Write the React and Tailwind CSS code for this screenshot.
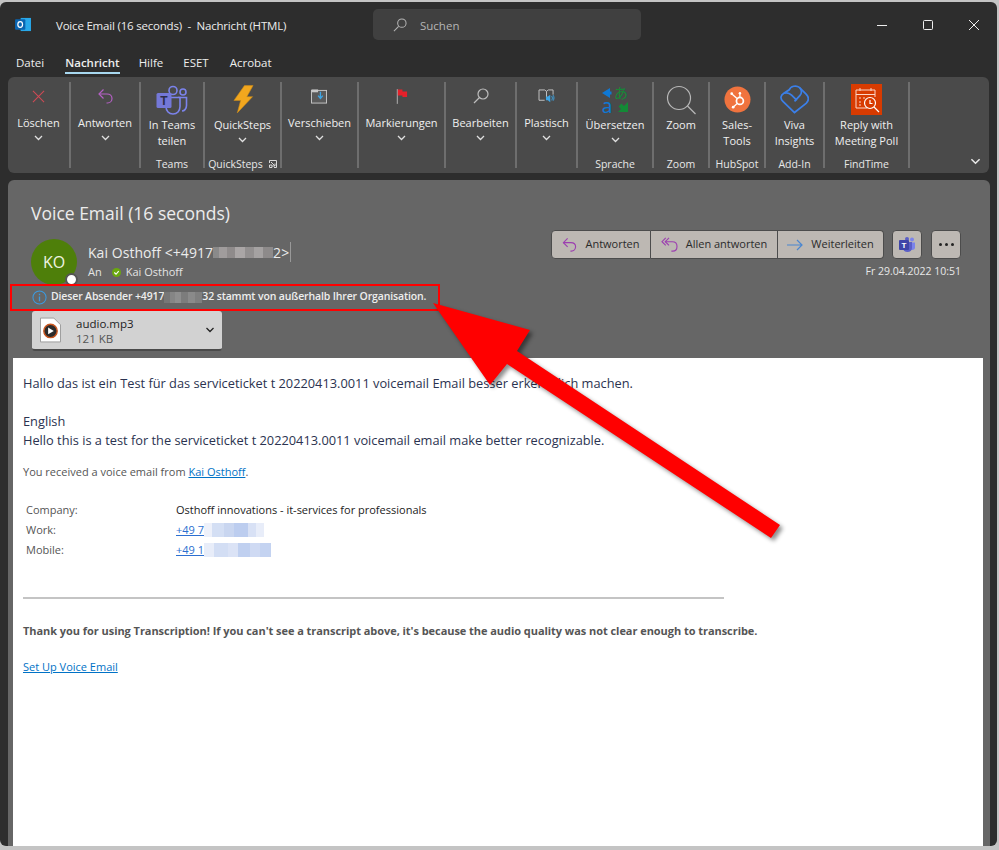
const ChevronDown = ({ className = "w-[9px] h-[6px]" }) => (
  <svg viewBox="0 0 9 6" className={className} fill="none" stroke="currentColor" strokeWidth="1.3">
    <path d="M1 1l3.5 3.5L8 1" />
  </svg>
);

const ReplyIcon = ({ color = "#b560c5", className = "w-[16px] h-[16px]" }) => (
  <svg viewBox="0 0 16 16" className={className} fill="none" stroke={color} strokeWidth="1.2">
    <path d="M6 1.5L1.5 6 6 10.5" />
    <path d="M1.5 6h8c3 0 5 2 5 4.5s-2 4.5-4.5 4.5H9" />
  </svg>
);

const ReplyAllIcon = () => (
  <svg viewBox="0 0 18 16" className="w-[17px] h-[15px]" fill="none" stroke="#9c3fb0" strokeWidth="1.2">
    <path d="M5 1L1 5l4 4" />
    <path d="M8.500 1L4.500 5l4 4" />
    <path d="M4.500 5h7.500c3 0 5 2 5 5s-2 5-4.500 5H11" />
  </svg>
);

const TeamsLogo = ({ className }) => (
  <svg viewBox="0 0 32 30" className={className}>
    <circle cx="17" cy="5.500" r="4" fill="none" stroke="#7b83eb" strokeWidth="1.600" />
    <circle cx="27" cy="7" r="3" fill="none" stroke="#7b83eb" strokeWidth="1.600" />
    <path d="M22 12.500h8.500v8c0 3-2 5.500-4.500 5.500" fill="none" stroke="#7b83eb" strokeWidth="1.600" />
    <path d="M10 12.500h14v9c0 4.500-3 7.500-7 7.500s-7-3-7-7.500z" fill="#4a4a4a" stroke="#7b83eb" strokeWidth="1.600" />
    <rect x="0.500" y="8" width="15" height="15" rx="1.500" fill="#7478d8" />
    <text x="8" y="20" textAnchor="middle" fontSize="12" fontWeight="700" fill="#2d2d4a" fontFamily="Liberation Sans, sans-serif">T</text>
  </svg>
);

const RibbonIcons = {
  del: (
    <svg viewBox="0 0 14 14" className="w-[13px] h-[13px]" fill="none" stroke="#d04a55" strokeWidth="1.100">
      <path d="M1 1l12 12M13 1L1 13" />
    </svg>
  ),
  reply: <ReplyIcon className="w-[17px] h-[16px]" />,
  teams: <TeamsLogo className="w-[32px] h-[30px]" />,
  quick: (
    <svg viewBox="0 0 24 30" className="w-[23px] h-[29px] ml-[2px]">
      <path d="M13 .5h9L15.500 12H21.500L5.500 29 9 16H2z" fill="#f2a71e" stroke="#c98a1a" strokeWidth=".6" />
    </svg>
  ),
  move: (
    <svg viewBox="0 0 18 16" className="w-[17px] h-[15px]">
      <rect x=".5" y="1.500" width="16" height="13.500" fill="#5a5a5a" stroke="#c8c8c8" />
      <rect x=".5" y=".5" width="7" height="3" fill="#c8c8c8" />
      <path d="M10 3v6M7.500 7L10 10l2.500-3" stroke="#3ea6e6" strokeWidth="1.400" fill="none" />
    </svg>
  ),
  flag: (
    <svg viewBox="0 0 13 16" className="w-[12px] h-[15px]">
      <path d="M1.500 0v16" stroke="#9a9a9a" strokeWidth="1.400" />
      <path d="M2 .5h5v2h5v6H7V7H2z" fill="#e5202a" />
    </svg>
  ),
  search: (
    <svg viewBox="0 0 16 16" className="w-[16px] h-[16px]" fill="none" stroke="#bdbdbd" strokeWidth="1.200">
      <circle cx="10" cy="6" r="5" />
      <path d="M6.500 9.500L1 15" />
    </svg>
  ),
  read: (
    <svg viewBox="0 0 18 16" className="w-[17px] h-[15px]" fill="none">
      <path d="M1 1h6l2 1.500L11 1h5v5M9 2.500V11M1 1v11h6" stroke="#c8c8c8" />
      <path d="M8.500 8v4h2l2.500 2V6l-2.500 2z" fill="#3ea6e6" />
      <path d="M14.500 7.500c1 1.500 1 3 0 4.500M16 6.500c1.300 2 1.300 4 0 6" stroke="#3ea6e6" />
    </svg>
  ),
  translate: (
    <svg viewBox="-2 -6 32 40" className="w-[32px] h-[40px] my-[-4px]">
      <path d="M1 7l8-5v3.500h1.500v3H9V12z" fill="#0f78d4" />
      <text x="20" y="12" textAnchor="middle" fontSize="14" fill="#138a36" fontFamily="Noto Sans CJK JP, sans-serif">あ</text>
      <text x="6" y="27" textAnchor="middle" fontSize="19" fill="#0f78d4" fontFamily="Noto Sans, sans-serif">a</text>
      <path d="M27 26h-10l3-3-2.500-2.500 3-3L23 20l4-4z" fill="#138a36" />
    </svg>
  ),
  zoom: (
    <svg viewBox="0 0 30 30" className="w-[30px] h-[30px]" fill="none" stroke="#b8b8b8" strokeWidth="1.200">
      <circle cx="13" cy="13" r="11.500" />
      <path d="M21.500 21l8 8" />
    </svg>
  ),
  hubspot: (
    <svg viewBox="0 0 28 28" className="w-[27px] h-[27px]">
      <circle cx="14" cy="14" r="13.500" fill="#f0733e" />
      <circle cx="16.500" cy="15.500" r="3.600" fill="none" stroke="#fff" strokeWidth="1.800" />
      <path d="M16.500 7.500v4.500M13.500 13L8.500 8.500M13.800 18l-3.800 3.500" stroke="#fff" strokeWidth="1.300" fill="none" />
      <circle cx="8" cy="8" r="1.400" fill="#fff" />
      <circle cx="9.500" cy="22" r="1.400" fill="#fff" />
      <circle cx="16.500" cy="7.500" r="1.300" fill="#fff" />
    </svg>
  ),
  viva: (
    <svg viewBox="0 0 30 30" className="w-[29px] h-[29px]" fill="none" stroke="#3b7fe8" strokeWidth="1.800">
      <path d="M15 28.500L3 17C0 14 .5 10.500 4 8.500L9.500 5C11 1 17 0 20 2.500L27 9.500C30 12.500 30 16 27 19z" />
      <path d="M4 8.500c3-1 6 0 8 2l5.500 5.500M20.500 3c2.500 2.500 2 6 0 8L15 17" />
    </svg>
  ),
  findtime: (
    <div className="w-[31px] h-[31px] bg-[#d83b01] flex items-center justify-center">
      <svg viewBox="0 0 26 26" className="w-[26px] h-[26px]" fill="none" stroke="#fbd6c8" strokeWidth="1">
        <path d="M13 21H2V3h19v7" />
        <path d="M2 7.500h19M6 1v3M17 1v3" />
        <path d="M5 11h2M9 11h2M5 15h2M5 18h2" />
        <circle cx="16" cy="16" r="5.500" stroke="#fff" strokeWidth="1.200" />
        <path d="M16 13v3.500h2.500M20 20l5 5" stroke="#fff" strokeWidth="1.200" />
      </svg>
    </div>
  ),
};

const groups = [
  { w: "w-[63px]", icon: "del", lines: ["Löschen"], chevron: true },
  { w: "w-[70px]", icon: "reply", lines: ["Antworten"], chevron: true },
  { w: "w-[64px]", icon: "teams", lines: ["In Teams", "teilen"], label: "Teams", big: true },
  { w: "w-[77px]", icon: "quick", lines: ["QuickSteps"], chevron: true, label: "QuickSteps", launcher: true, big: true },
  { w: "w-[77px]", icon: "move", lines: ["Verschieben"], chevron: true },
  { w: "w-[87px]", icon: "flag", lines: ["Markierungen"], chevron: true },
  { w: "w-[71px]", icon: "search", lines: ["Bearbeiten"], chevron: true },
  { w: "w-[61px]", icon: "read", lines: ["Plastisch"], chevron: true },
  { w: "w-[76px]", icon: "translate", lines: ["Übersetzen"], chevron: true, label: "Sprache", big: true },
  { w: "w-[56px]", icon: "zoom", lines: ["Zoom"], label: "Zoom", big: true },
  { w: "w-[56px]", icon: "hubspot", lines: ["Sales-", "Tools"], label: "HubSpot", big: true },
  { w: "w-[59px]", icon: "viva", lines: ["Viva", "Insights"], label: "Add-In", big: true },
  { w: "w-[85px]", icon: "findtime", lines: ["Reply with", "Meeting Poll"], label: "FindTime", big: true },
];

const RibbonGroup = ({ group }) => (
  <div className={`${group.w} shrink-0 relative flex flex-col items-center border-r-2 border-[#6e6e6e] h-[86px] text-[11px] leading-[16px] text-[#f0f0f0] whitespace-nowrap`}>
    <div className={`flex items-center justify-center ${group.big ? "h-[33px] mt-[1px] mb-[1px]" : "h-[28px] mb-[5px]"}`}>
      {RibbonIcons[group.icon]}
    </div>
    {group.lines.map((line) => (
      <div key={line}>{line}</div>
    ))}
    {group.chevron && (
      <div className="mt-[4px] text-[#e0e0e0]">
        <ChevronDown />
      </div>
    )}
    {group.label && (
      <div className="absolute bottom-[-4px] left-0 right-0 flex justify-center items-center gap-[6px] text-[10.5px] text-[#e8e8e8]">
        {group.label}
        {group.launcher && (
          <svg viewBox="0 0 8 8" className="w-[8px] h-[8px]" fill="none" stroke="#d8d8d8">
            <path d="M.5 3V.5H7.500V7.500H5M2 2l4 4M6 3.500V6H3.500M.5 5h2.500v2.500H.5z" />
          </svg>
        )}
      </div>
    )}
  </div>
);

// pixelated blur used for the redacted phone numbers
const Blur = ({ cells }) => (
  <span className="inline-flex align-middle">
    {cells.map((cell, i) => (
      <span key={i} className={`inline-block ${cell}`} />
    ))}
  </span>
);

const ActionButton = ({ icon, label, className }) => (
  <button className={`h-[29px] flex items-center justify-center gap-[8px] bg-[#bdb8b3] text-[11px] text-[#2b2b2b] border border-[#4c4c4c] ${className}`}>
    {icon}
    {label}
  </button>
);

const App = () => {
  return (
    <div className="w-[999px] h-[850px] bg-[#c4c4c4] overflow-hidden font-['Open_Sans',sans-serif] relative">
      <div className="h-[844px] mt-[2px] mr-[2px] pt-[1px] bg-[#2d2d2d] rounded-[6px] flex flex-col">
        {/* title bar */}
        <div className="h-[42px] flex items-center shrink-0 relative">
          <svg viewBox="0 0 17 16" className="w-[16px] h-[15px] ml-[15px] mr-[25px]">
            <rect x="6" y="1" width="11" height="14" fill="#28a8ea" />
            <rect x="0" y="2.500" width="11" height="11" rx="1" fill="#0a64b0" />
            <ellipse cx="5.500" cy="8" rx="2.500" ry="3" fill="none" stroke="#fff" strokeWidth="1.300" />
          </svg>
          <div className="w-[317px] pt-[4px] text-[11.5px] tracking-[-0.2px] text-[#ececec] whitespace-pre">Voice Email (16 seconds)  -  Nachricht (HTML)</div>
          <div className="w-[268px] h-[31px] rounded-[5px] bg-[#404040] flex items-center pl-[20px] gap-[13px] text-[11.5px] text-[#b5b5b5]">
            <svg viewBox="0 0 15 15" className="w-[14px] h-[14px] mt-[1px]" fill="none" stroke="#b5b5b5" strokeWidth="1.100">
              <circle cx="9.500" cy="5.500" r="4.500" />
              <path d="M6 9L1 14" />
            </svg>
            <span className="pt-[3px]">Suchen</span>
          </div>
          <div className="flex-1 flex justify-end items-center gap-[36px] pt-[2px] pr-[18px] text-[#eeeeee]">
            <svg viewBox="0 0 10 10" className="w-[10px] h-[10px]" fill="none" stroke="currentColor"><path d="M0 5.500h10" /></svg>
            <svg viewBox="0 0 10 10" className="w-[10px] h-[10px]" fill="none" stroke="currentColor"><rect x=".5" y=".5" width="9" height="9" rx="1" /></svg>
            <svg viewBox="0 0 10 10" className="w-[10px] h-[10px]" fill="none" stroke="currentColor"><path d="M0 0l10 10M10 0L0 10" /></svg>
          </div>
        </div>
        {/* tabs */}
        <div className="h-[32px] flex items-start pt-[10px] pl-[16px] text-[11.5px] leading-[16px] text-[#eeeeee] shrink-0">
          <span className="mr-[21px]">Datei</span>
          <span className="mr-[19px] font-semibold border-b-2 border-[#a8d8f0] h-[19px]">Nachricht</span>
          <span className="mr-[20px]">Hilfe</span>
          <span className="mr-[21px]">ESET</span>
          <span>Acrobat</span>
        </div>
        {/* ribbon */}
        <div className="ml-[8px] mr-[8px] h-[96px] bg-[#4a4a4a] rounded-[6px] flex pt-[5px] shrink-0 relative">
          {groups.map((group) => (
            <RibbonGroup key={group.icon} group={group} />
          ))}
          <div className="flex-1 flex items-end justify-end pr-[8px] pb-[8px] text-[#e8e8e8]">
            <ChevronDown className="w-[11px] h-[7px]" />
          </div>
        </div>
        {/* message */}
        <div className="ml-[8px] mr-[7px] mt-[7px] flex-1 min-h-0 bg-[#666666] rounded-t-[6px] flex flex-col relative">
          <div className="h-[178px] shrink-0 flex justify-between">
            <div className="pl-[23px] pt-[19px]">
              <div className="text-[17.5px] leading-[28px] text-[#ececec]">Voice Email (16 seconds)</div>
              <div className="flex mt-[12px]">
                <div className="w-[46px] h-[46px] rounded-full bg-[#4e7f0a] relative flex items-center justify-center text-[16px] text-[#eef4e2]">
                  KO
                  <span className="absolute right-[-1px] bottom-[-1px] w-[13px] h-[13px] rounded-full bg-white border-2 border-[#555]" />
                </div>
                <div className="ml-[11px]">
                  <div className="flex items-center h-[24px] pt-[2px] text-[14px] tracking-[0.05px] text-[#ececec]">
                    Kai Osthoff &lt;+4917
                    <Blur cells={["w-[6px] h-[11px] bg-[#8a8a8a]", "w-[8px] h-[11px] bg-[#a09c9c]", "w-[8px] h-[11px] bg-[#8f8b8b]", "w-[10px] h-[11px] bg-[#aaa6a6]", "w-[9px] h-[11px] bg-[#939090]", "w-[9px] h-[11px] bg-[#a5a2a2]", "w-[10px] h-[11px] bg-[#8d8a8a]"]} />
                    2&gt;
                    <span className="w-px h-[20px] bg-[#999] ml-[1px]" />
                  </div>
                  <div className="flex items-center h-[14px] mt-[2px] text-[11px] text-[#e4e4e4]">
                    An
                    <span className="w-[9px] h-[9px] rounded-full bg-[#6aa80e] ml-[10px] mr-[5px] flex items-center justify-center">
                      <svg viewBox="0 0 8 8" className="w-[7px] h-[7px]" fill="none" stroke="#fff" strokeWidth="1.300"><path d="M1.500 4l2 2 3-3.500" /></svg>
                    </span>
                    Kai Osthoff
                  </div>
                </div>
              </div>
              <div className="flex items-center h-[16px] mt-[4px] ml-[1px] text-[10.5px] font-semibold tracking-[-0.14px] text-[#eeeeee] whitespace-nowrap">
                <svg viewBox="0 0 16 16" className="w-[15px] h-[15px] mr-[4px]" fill="none" stroke="#3b9be0" strokeWidth="1.100">
                  <circle cx="8" cy="8" r="7" />
                  <path d="M8 7v5M8 4v1.500" strokeWidth="1.400" />
                </svg>
                Dieser Absender +4917
                <Blur cells={["w-[6px] h-[11px] bg-[#777777]", "w-[5px] h-[11px] bg-[#858585]", "w-[6px] h-[11px] bg-[#8e8e8e]", "w-[7px] h-[11px] bg-[#7c7c7c]", "w-[7px] h-[11px] bg-[#8a8a8a]", "w-[7px] h-[11px] bg-[#7f7f7f]"]} />
                32 stammt von außerhalb Ihrer Organisation.
              </div>
              <div className="mt-[6px] ml-[1px] w-[190px] h-[40px] rounded-[3px] bg-[#d2d2d2] border-b-2 border-[#4a4a4a] flex items-center pl-[8px] pr-[7px]">
                <svg viewBox="0 0 22 26" className="w-[21px] h-[26px] shrink-0">
                  <path d="M.5.5h14l7 7v18H.5z" fill="#fff" stroke="#9a9a9a" />
                  <circle cx="11" cy="14" r="7" fill="#2b2b2b" stroke="#c9561f" strokeWidth="1.500" />
                  <path d="M8.500 10.500v7l6-3.500z" fill="#fff" />
                </svg>
                <div className="ml-[15px] pt-[1px] flex-1 text-[11.500px] leading-[15px]">
                  <div className="font-medium text-[#222]">audio.mp3</div>
                  <div className="text-[#555]">121 KB</div>
                </div>
                <ChevronDown className="w-[10px] h-[6px] text-[#222]" />
              </div>
            </div>
            <div className="pr-[29px] pt-[50px] flex flex-col items-end">
              <div className="flex">
                <ActionButton className="w-[100px] rounded-l-[4px]" label="Antworten" icon={<ReplyIcon color="#9c3fb0" className="w-[15px] h-[15px]" />} />
                <ActionButton className="w-[127px] border-l-0" label="Allen antworten" icon={<ReplyAllIcon />} />
                <ActionButton
                  className="w-[106px] border-l-0 rounded-r-[4px]"
                  label="Weiterleiten"
                  icon={
                    <svg viewBox="0 0 16 12" className="w-[16px] h-[12px]" fill="none" stroke="#4a86d0" strokeWidth="1.200">
                      <path d="M0 6h15M10 1l5 5-5 5" />
                    </svg>
                  }
                />
                <button className="w-[30px] h-[29px] ml-[8px] rounded-[4px] bg-[#bdb8b3] border border-[#4c4c4c] flex items-center justify-center">
                  <svg viewBox="0 0 16 15" className="w-[16px] h-[15px]">
                    <circle cx="13" cy="2.500" r="2" fill="#7b83eb" />
                    <path d="M10 5.500h6v5c0 1.500-1 2.500-3 2.500s-3-1-3-2.500z" fill="#7b83eb" />
                    <circle cx="8" cy="2" r="2" fill="#5b5fc7" />
                    <path d="M4 5h9v6c0 2.500-2 4-4.500 4S4 13.500 4 11z" fill="#5b5fc7" />
                    <rect x="0" y="3" width="10" height="10" rx="1" fill="#3f45a8" />
                    <text x="5" y="11" textAnchor="middle" fontSize="8" fontWeight="700" fill="#fff" fontFamily="Liberation Sans, sans-serif">T</text>
                  </svg>
                </button>
                <button className="w-[30px] h-[29px] ml-[9px] rounded-[4px] bg-[#bdb8b3] border border-[#4c4c4c] flex items-center justify-center gap-[3px]">
                  <span className="w-[3px] h-[3px] rounded-full bg-[#222]" />
                  <span className="w-[3px] h-[3px] rounded-full bg-[#222]" />
                  <span className="w-[3px] h-[3px] rounded-full bg-[#222]" />
                </button>
              </div>
              <div className="mt-[4px] text-[10.5px] leading-[16px] text-[#e8e8e8]">Fr 29.04.2022 10:51</div>
            </div>
          </div>
          {/* mail body */}
          <div className="ml-[5px] mr-[7px] flex-1 bg-white pl-[10px] pt-[16px] text-[#2b3350]">
            <p className="text-[12.8px] leading-[19px]">Hallo das ist ein Test für das serviceticket t 20220413.0011 voicemail Email besser erkenntlich machen.</p>
            <p className="text-[12.8px] leading-[19px] mt-[19px]">English</p>
            <p className="text-[12.8px] leading-[19px]">Hello this is a test for the serviceticket t 20220413.0011 voicemail email make better recognizable.</p>
            <p className="text-[11px] leading-[16px] mt-[14px] text-[#555]">
              You received a voice email from <a className="text-[#0072c6] underline">Kai Osthoff</a>.
            </p>
            <div className="mt-[20px] ml-[3px] text-[11px] grid grid-cols-[150px_1fr] auto-rows-[20px] items-center text-[#555]">
              <div>Company:</div>
              <div className="text-[#222]">Osthoff innovations - it-services for professionals</div>
              <div>Work:</div>
              <div className="flex items-center">
                <a className="text-[#2d6fd0] underline">+49 7</a>
                <Blur cells={["w-[8px] h-[14px] bg-[#eef1fa]", "w-[12px] h-[14px] bg-[#d4dff4]", "w-[10px] h-[14px] bg-[#c9d6f0]", "w-[14px] h-[14px] bg-[#bccdef]", "w-[8px] h-[14px] bg-[#d8e1f5]", "w-[8px] h-[14px] bg-[#e8edf9]"]} />
              </div>
              <div>Mobile:</div>
              <div className="flex items-center">
                <a className="text-[#2d6fd0] underline">+49 1</a>
                <Blur cells={["w-[10px] h-[14px] bg-[#e8edf9]", "w-[14px] h-[14px] bg-[#d3def4]", "w-[10px] h-[14px] bg-[#dbe3f6]", "w-[12px] h-[14px] bg-[#c0d0f0]", "w-[10px] h-[14px] bg-[#cfdaf3]", "w-[11px] h-[14px] bg-[#c4d3f1]"]} />
              </div>
            </div>
            <div className="mt-[37px] w-[701px] border-t-2 border-[#c4c4c4]" />
            <p className="mt-[24px] text-[11px] leading-[16px] font-bold tracking-[-0.05px] text-[#555] whitespace-nowrap">Thank you for using Transcription! If you can't see a transcript above, it's because the audio quality was not clear enough to transcribe.</p>
            <p className="mt-[20px] text-[11px] leading-[16px]"><a className="text-[#0072c6] underline">Set Up Voice Email</a></p>
          </div>
        </div>
      </div>
      {/* annotation drawn on top of the screenshot */}
      <div className="absolute left-[10px] top-[284px] w-[430px] h-[27px] border-2 border-[#ff0000]" />
      <svg className="absolute left-0 top-0 w-[999px] h-[850px] pointer-events-none drop-shadow-[3px_3px_2px_rgba(0,0,0,0.45)]" viewBox="0 0 999 850">
        <polygon points="433,303 530,330 517,351 780,525 771,538 507,364 490,385" fill="#ff0000" />
      </svg>
    </div>
  );
};

export default App;
